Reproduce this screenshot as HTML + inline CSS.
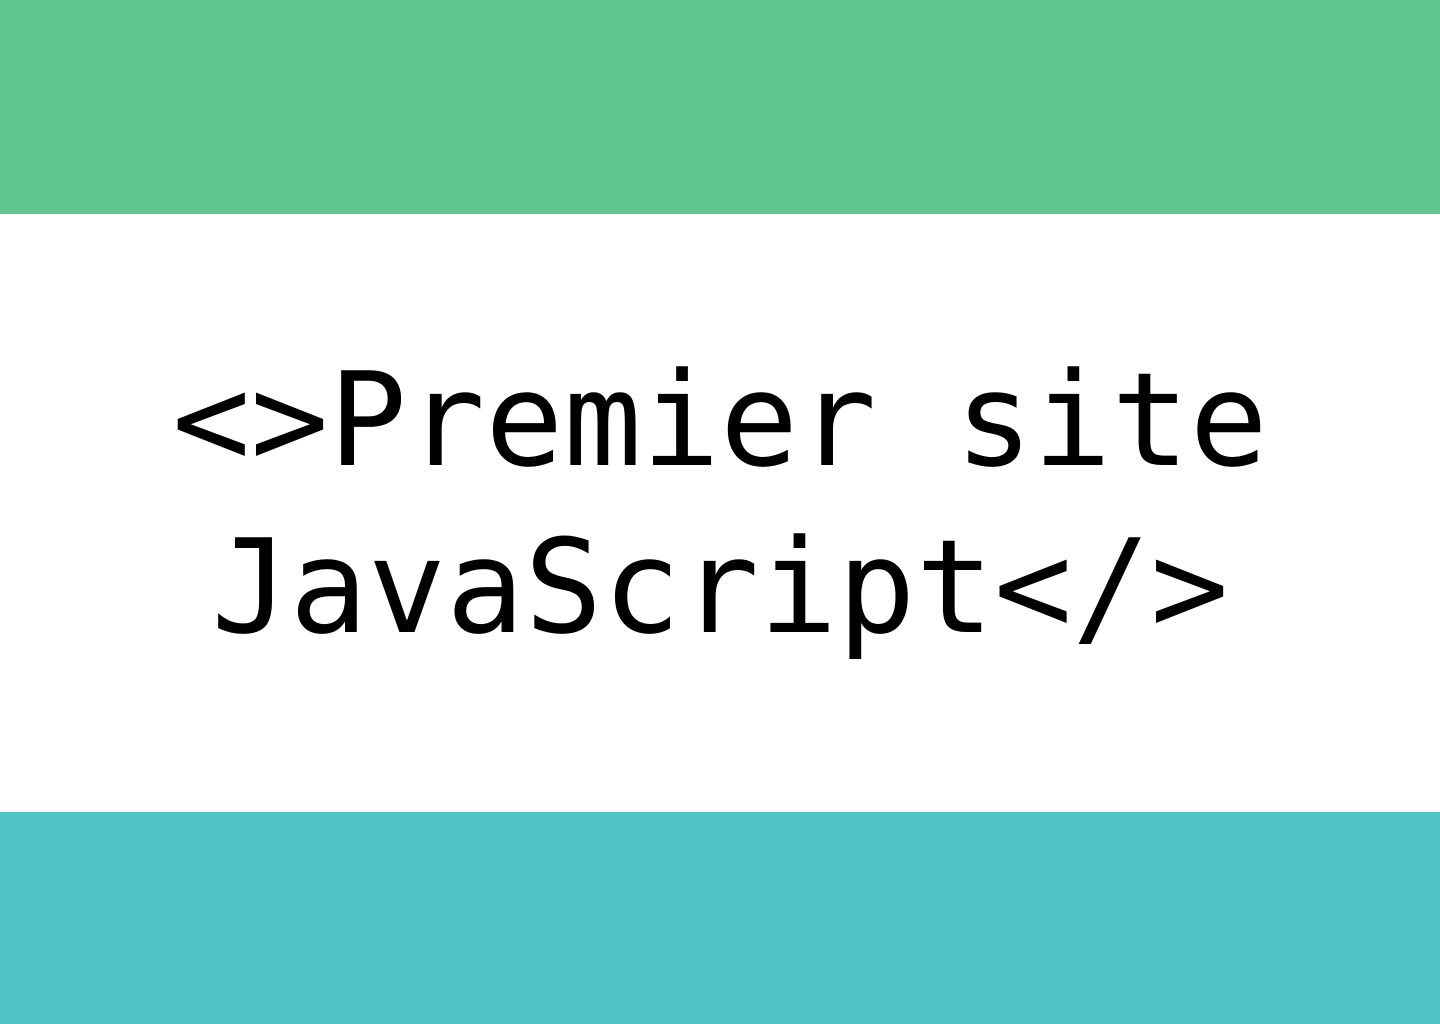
<!DOCTYPE html>
<html><head><meta charset="utf-8"><style>
html,body{margin:0;padding:0;width:1440px;height:1024px;overflow:hidden;background:#fff}
.top{position:absolute;left:0;top:0;width:1440px;height:214px;background:#61C790}
.bot{position:absolute;left:0;top:812px;width:1440px;height:212px;background:#4EC4C4}
.t{position:absolute;left:0;width:1440px;top:337px;text-align:center;font-family:"DejaVu Sans Mono","Liberation Mono",monospace;font-size:130px;line-height:167px;color:#000;white-space:pre}
</style></head><body>
<div class="top"></div>
<div class="t">&lt;&gt;Premier site
JavaScript&lt;/&gt;</div>
<div class="bot"></div>
</body></html>
